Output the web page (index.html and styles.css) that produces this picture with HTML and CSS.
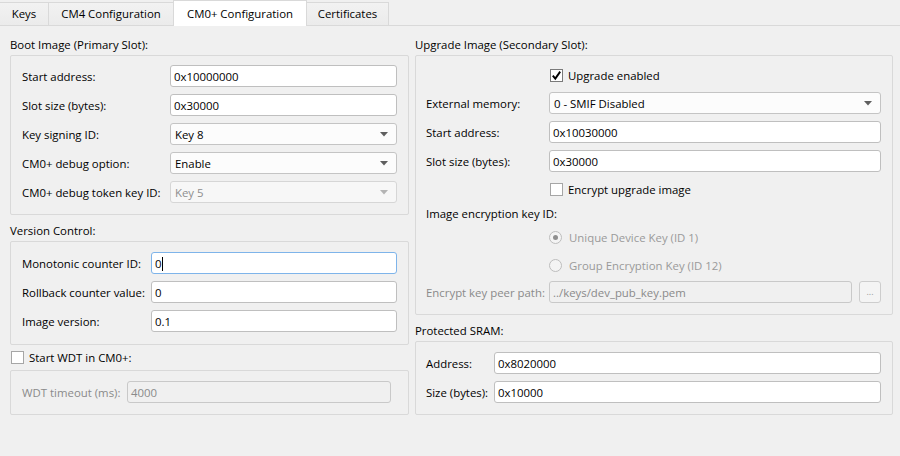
FILE: index.html
```html
<!DOCTYPE html>
<html>
<head>
<meta charset="utf-8">
<link rel="stylesheet" href="styles.css">
</head>
<body>
<div class="tabs">
  <div class="tab tab-keys">Keys</div>
  <div class="tab tab-cm4">CM4 Configuration</div>
  <div class="tab tab-cm0 active">CM0+ Configuration</div>
  <div class="tab tab-cert">Certificates</div>
</div>
<div class="content">
  <div class="col">
    <div class="title">Boot Image (Primary Slot):</div>
    <div class="group g-boot">
      <div class="row"><span class="lbl">Start address:</span><div class="field">0x10000000</div></div>
      <div class="row"><span class="lbl">Slot size (bytes):</span><div class="field">0x30000</div></div>
      <div class="row"><span class="lbl">Key signing ID:</span><div class="field select">Key 8<svg class="arrow" width="8" height="5" viewBox="0 0 8 5"><path d="M0 0H8L4 4.5Z"/></svg></div></div>
      <div class="row"><span class="lbl">CM0+ debug option:</span><div class="field select">Enable<svg class="arrow" width="8" height="5" viewBox="0 0 8 5"><path d="M0 0H8L4 4.5Z"/></svg></div></div>
      <div class="row"><span class="lbl">CM0+ debug token key ID:</span><div class="field select disabled-select">Key 5<svg class="arrow" width="8" height="5" viewBox="0 0 8 5"><path d="M0 0H8L4 4.5Z"/></svg></div></div>
    </div>

    <div class="title t-next">Version Control:</div>
    <div class="group g-ver">
      <div class="row"><span class="lbl">Monotonic counter ID:</span><div class="field focused">0<span class="caret"></span></div></div>
      <div class="row"><span class="lbl">Rollback counter value:</span><div class="field">0</div></div>
      <div class="row"><span class="lbl">Image version:</span><div class="field">0.1</div></div>
    </div>

    <div class="check-title"><span class="cb"></span><span class="txt">Start WDT in CM0+:</span></div>
    <div class="group g-wdt">
      <div class="row"><span class="lbl dim">WDT timeout (ms):</span><div class="field disabled">4000</div></div>
    </div>
  </div>

  <div class="col">
    <div class="title">Upgrade Image (Secondary Slot):</div>
    <div class="group g-up">
      <div class="row r-cb1"><span class="lbl"></span><div class="check"><span class="cb checked"><svg width="11" height="11" viewBox="0 0 11 11"><path d="M1.8 5.6 L4.3 8.6 L9.2 1.6" fill="none" stroke="#000" stroke-width="1.9"/></svg></span><span class="txt">Upgrade enabled</span></div></div>
      <div class="row r-sel"><span class="lbl">External memory:</span><div class="field select">0 - SMIF Disabled<svg class="arrow" width="8" height="5" viewBox="0 0 8 5"><path d="M0 0H8L4 4.5Z"/></svg></div></div>
      <div class="row r-n"><span class="lbl">Start address:</span><div class="field">0x10030000</div></div>
      <div class="row r-n"><span class="lbl">Slot size (bytes):</span><div class="field">0x30000</div></div>
      <div class="row r-cb2"><span class="lbl"></span><div class="check"><span class="cb"></span><span class="txt">Encrypt upgrade image</span></div></div>
      <div class="sub-label">Image encryption key ID:</div>
      <div class="row r-rad1"><span class="lbl"></span><div class="radio-item"><span class="radio on"></span><span class="txt">Unique Device Key (ID 1)</span></div></div>
      <div class="row r-rad2"><span class="lbl"></span><div class="radio-item"><span class="radio"></span><span class="txt">Group Encryption Key (ID 12)</span></div></div>
      <div class="row r-path"><span class="lbl dim">Encrypt key peer path:</span><div class="path-wrap"><div class="field disabled">../keys/dev_pub_key.pem</div><div class="btn">...</div></div></div>
    </div>

    <div class="title t-next">Protected SRAM:</div>
    <div class="group g-sram">
      <div class="row"><span class="lbl">Address:</span><div class="field">0x8020000</div></div>
      <div class="row"><span class="lbl">Size (bytes):</span><div class="field">0x10000</div></div>
    </div>
  </div>
</div>
</body>
</html>
```

FILE: styles.css
```css
html, body {
  margin: 0;
  padding: 0;
  background: #f0f0f0;
  width: 900px;
  height: 456px;
  overflow: hidden;
  font-family: "Open Sans", "Noto Sans", sans-serif;
  font-size: 11.4px;
  color: #000;
}

.tabs {
  display: flex;
  align-items: flex-end;
  height: 25px;
  border-bottom: 1px solid #d9d9d9;
}

.tab {
  box-sizing: border-box;
  height: 23px;
  line-height: 22px;
  border: 1px solid #d9d9d9;
  border-bottom: none;
  margin-right: -1px;
  background: linear-gradient(#f2f2f2, #ebebeb);
  text-align: center;
}
.tab-keys { width: 49px; border-left: none; }
.tab-cm4 { width: 126px; }
.tab-cm0 { width: 134px; }
.tab-cert { width: 83px; }

.tab.active {
  height: 26px;
  margin-bottom: -1px;
  background: #fff;
  line-height: 25px;
}

.content {
  display: grid;
  grid-template-columns: 399px 478px;
  column-gap: 6px;
  padding: 10px 7px 0 10px;
}

.col {
  display: flex;
  flex-direction: column;
}

.title {
  height: 16px;
  line-height: 17px;
  margin-bottom: 3px;
}
.t-next { margin-top: 7px; }

.group {
  border: 1px solid #d9d9d9;
  border-radius: 2px;
  display: flex;
  flex-direction: column;
  gap: 7px;
  padding: 9px 11px 11px 11px;
}

.row {
  display: grid;
  grid-template-columns: var(--lbl) 1fr;
  align-items: center;
  height: 22px;
}

.g-boot { --lbl: 148px; }
.g-ver { --lbl: 129px; padding-top: 10px; padding-bottom: 12px; }
.g-wdt { --lbl: 105px; padding-top: 10px; padding-right: 17px; }
.g-up { --lbl: 123px; gap: 0; padding: 8px 11px 11px 10px; }
.g-sram { --lbl: 68px; padding: 10px 11px 11px 10px; }

.lbl, .txt { white-space: nowrap; }
.dim { color: #8a8a8a; }

.field {
  box-sizing: border-box;
  height: 22px;
  line-height: 21px;
  padding: 0 3px;
  border: 1px solid #bfbfbf;
  border-radius: 3px;
  background: #fff;
  white-space: nowrap;
  overflow: hidden;
  position: relative;
}
.field.focused { border-color: #7eb4ea; }
.field.disabled {
  background: #f0f0f0;
  border-color: #c9c9c9;
  color: #8a8a8a;
}
.select {
  background: #fcfcfc;
  border-color: #c4c4c4;
  padding-left: 4px;
}
.select .arrow {
  position: absolute;
  right: 8px;
  top: 8px;
  fill: #5f5f5f;
}
.disabled-select { color: #8e8e8e; border-color: #d6d6d6; background: #f7f7f7; }
.disabled-select .arrow { fill: #b4b4b4; }

.caret {
  display: inline-block;
  width: 1px;
  height: 14px;
  background: #000;
  vertical-align: -3px;
}

.check-title {
  display: flex;
  align-items: center;
  gap: 5px;
  height: 16px;
  margin-top: 4px;
  margin-bottom: 5px;
  padding-left: 1px;
}

.cb {
  box-sizing: border-box;
  width: 13px;
  height: 13px;
  border: 1px solid #a6a6a6;
  background: #fff;
  display: inline-flex;
  align-items: center;
  justify-content: center;
  flex: none;
}
.cb.checked { border-color: #7a7a7a; }

.check {
  display: flex;
  align-items: center;
  gap: 5px;
  padding-left: 1px;
}

.r-sel { margin-top: 6px; }
.r-n { margin-top: 7px; }
.r-cb2 { margin-top: 6px; }
.sub-label { height: 16px; line-height: 17px; margin-top: 5px; }
.r-rad1 { margin-top: 5px; }
.r-rad2 { margin-top: 6px; }
.r-path { margin-top: 5px; }

.radio-item {
  display: flex;
  align-items: center;
  gap: 7px;
  color: #9a9a9a;
}
.radio {
  box-sizing: border-box;
  width: 13px;
  height: 13px;
  border: 1px solid #bdbdbd;
  border-radius: 50%;
  background: #f4f4f4;
  display: inline-flex;
  align-items: center;
  justify-content: center;
}
.radio.on::after {
  content: "";
  width: 5px;
  height: 5px;
  border-radius: 50%;
  background: #8f8f8f;
}

.path-wrap {
  display: grid;
  grid-template-columns: 1fr 22px;
  column-gap: 7px;
}
.btn {
  box-sizing: border-box;
  height: 22px;
  border: 1px solid #cdcdcd;
  border-radius: 3px;
  background: #f4f4f4;
  color: #9a9a9a;
  font-size: 9px;
  text-align: center;
  line-height: 20px;
}
```
